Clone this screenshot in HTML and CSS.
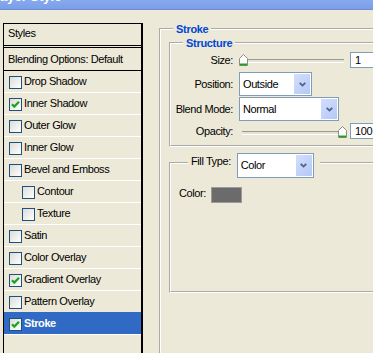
FILE: index.html
```html
<!DOCTYPE html>
<html lang="en">
<head>
    <meta charset="UTF-8">
    <meta name="viewport" content="width=device-width, initial-scale=1.0">
    <title>Layer Style</title>
    <link rel="stylesheet" href="styles.css">
</head>
<body>
    <div class="titlebar"><span class="title">Layer Style</span></div>

    <div class="dialog">
        <!-- lista de estilos -->
        <div class="styles-list">
            <div class="list-head">Styles</div>
            <div class="list-blend">Blending Options: Default</div>
            <div class="item"><span class="check"></span>Drop Shadow</div>
            <div class="item"><span class="check"><svg width="11" height="11" viewBox="0 0 11 11"><polyline points="2,5.2 4.3,7.6 9,2.8" fill="none" stroke="#21a121" stroke-width="2.2"/></svg></span>Inner Shadow</div>
            <div class="item"><span class="check"></span>Outer Glow</div>
            <div class="item"><span class="check"></span>Inner Glow</div>
            <div class="item"><span class="check"></span>Bevel and Emboss</div>
            <div class="item sub"><span class="check"></span>Contour</div>
            <div class="item sub"><span class="check"></span>Texture</div>
            <div class="item"><span class="check"></span>Satin</div>
            <div class="item"><span class="check"></span>Color Overlay</div>
            <div class="item"><span class="check"><svg width="11" height="11" viewBox="0 0 11 11"><polyline points="2,5.2 4.3,7.6 9,2.8" fill="none" stroke="#21a121" stroke-width="2.2"/></svg></span>Gradient Overlay</div>
            <div class="item"><span class="check"></span>Pattern Overlay</div>
            <div class="item selected"><span class="check"><svg width="11" height="11" viewBox="0 0 11 11"><polyline points="2,5.2 4.3,7.6 9,2.8" fill="none" stroke="#21a121" stroke-width="2.2"/></svg></span>Stroke</div>
        </div>

        <!-- opciones de trazo -->
        <div class="settings">
            <fieldset class="group stroke">
                <legend>Stroke</legend>

                <fieldset class="group structure">
                    <legend>Structure</legend>

                    <div class="field field-size">
                        <label>Size:</label>
                        <div class="slider">
                            <div class="track"></div>
                            <span class="thumb" style="left: 0px;"><svg width="9" height="12" viewBox="0 0 9 12"><path d="M0.5 4.5 L4.5 0.5 L8.5 4.5 V11.5 H0.5 Z" fill="#fff" stroke="#8f8d80"/><path d="M1 10.5 H8" stroke="#21a121" stroke-width="2"/></svg></span>
                        </div>
                        <div class="num">1</div>
                    </div>

                    <div class="field field-position">
                        <label>Position:</label>
                        <div class="combo combo-position">
                            <span class="value">Outside</span>
                            <span class="btn"><svg width="7" height="5" viewBox="0 0 7 5"><polyline points="0.7,0.8 3.5,3.6 6.3,0.8" fill="none" stroke="#4d6185" stroke-width="1.8"/></svg></span>
                        </div>
                    </div>

                    <div class="field field-blend">
                        <label>Blend Mode:</label>
                        <div class="combo combo-blend">
                            <span class="value">Normal</span>
                            <span class="btn"><svg width="7" height="5" viewBox="0 0 7 5"><polyline points="0.7,0.8 3.5,3.6 6.3,0.8" fill="none" stroke="#4d6185" stroke-width="1.8"/></svg></span>
                        </div>
                    </div>

                    <div class="field field-opacity">
                        <label>Opacity:</label>
                        <div class="slider">
                            <div class="track"></div>
                            <span class="thumb" style="left: 99px;"><svg width="9" height="12" viewBox="0 0 9 12"><path d="M0.5 4.5 L4.5 0.5 L8.5 4.5 V11.5 H0.5 Z" fill="#fff" stroke="#8f8d80"/><path d="M1 10.5 H8" stroke="#21a121" stroke-width="2"/></svg></span>
                        </div>
                        <div class="num">100</div>
                    </div>
                </fieldset>

                <fieldset class="group fill">
                    <legend>
                        <span class="fill-label">Fill Type:</span>
                        <span class="combo combo-fill">
                            <span class="value">Color</span>
                            <span class="btn"><svg width="7" height="5" viewBox="0 0 7 5"><polyline points="0.7,0.8 3.5,3.6 6.3,0.8" fill="none" stroke="#4d6185" stroke-width="1.8"/></svg></span>
                        </span>
                    </legend>

                    <div class="color-row">
                        <label>Color:</label>
                        <span class="swatch"></span>
                    </div>
                </fieldset>
            </fieldset>
        </div>
    </div>
</body>
</html>
```

FILE: styles.css
```css
html, body {
    margin: 0;
    height: 100%;
    overflow: hidden;
}
body {
    background: #ece9d8;
    font-family: "Liberation Sans", Arial, sans-serif;
    font-size: 11px;
    letter-spacing: -0.4px;
    color: #000;
}

/* barra de título (cortada) */
.titlebar {
    height: 9px;
    border-bottom: 1px solid #6a8ddc;
    background: linear-gradient(#86a9ee, #7b9ee7);
    overflow: hidden;
}
.title {
    display: block;
    margin: -11px 0 0 -8px;
    font-size: 13px;
    line-height: 15px;
    font-weight: bold;
    letter-spacing: 0;
    color: #fff;
}

.dialog {
    display: flex;
    align-items: flex-start;
    gap: 16px;
    padding: 13px 0 0 3px;
}

/* lista izquierda */
.styles-list {
    width: 140px;
    height: 340px;
    flex-shrink: 0;
    box-sizing: border-box;
    border: 1px solid #000;
    border-right-width: 2px;
    border-bottom: none;
}
.list-head {
    height: 19px;
    line-height: 19px;
    padding: 0 0 2px 4px;
    border-bottom: 1px solid #000;
}
.list-blend {
    height: 22px;
    line-height: 22px;
    margin-top: 1px;
    padding-left: 4px;
    border-top: 1px solid #000;
    border-bottom: 1px solid #000;
}
.item {
    display: flex;
    align-items: center;
    height: 19px;
    padding: 0 0 2px 5px;
    border-bottom: 1px solid #fff;
}
.item.sub {
    padding-left: 18px;
}
.item.selected {
    background: #316ac5;
    box-shadow: 0 -1px 0 #316ac5;
    color: #fff;
    font-weight: bold;
}
.check {
    display: flex;
    width: 13px;
    height: 13px;
    box-sizing: border-box;
    margin: 4px 2px 0 0;
    border: 1px solid #1c5180;
    background: linear-gradient(135deg, #dcdcd7, #fff);
}
.check svg {
    display: block;
}

/* panel derecho */
.settings {
    width: 260px;
    flex-shrink: 0;
}
.group {
    margin: 0;
    padding: 0;
    min-width: 0;
    border: 2px groove #fff;
}
.group > legend {
    padding: 0 3px;
    line-height: 12px;
    color: #0046d5;
    font-weight: bold;
    letter-spacing: -0.3px;
}
.stroke {
    padding: 2px 0 100px 8px;
}
.stroke > legend {
    margin-left: 4px;
}
.structure {
    padding: 3px 0 6px 0;
}
.structure > legend {
    margin-left: 12px;
}

.field {
    display: flex;
    align-items: center;
}
.field label {
    width: 62px;
    flex-shrink: 0;
    margin-right: 6px;
    text-align: right;
}
.field-size {
    height: 16px;
    margin-bottom: 4px;
}
.field-position {
    height: 24px;
    margin-bottom: 1px;
}
.field-blend {
    height: 24px;
    margin-bottom: 2px;
}
.field-opacity {
    height: 16px;
}
.field-opacity .slider {
    margin-top: 3px;
}

.slider {
    position: relative;
    width: 108px;
    padding: 5px 0 4px;
}
.track {
    height: 2px;
    margin: 0 3px;
    border-top: 1px solid #9d9a8c;
    border-bottom: 1px solid #fff;
    background: #e4e1d5;
}
.thumb {
    position: absolute;
    top: 0;
    display: block;
}
.thumb svg {
    display: block;
}

.num {
    width: 40px;
    height: 16px;
    box-sizing: border-box;
    margin-left: 3px;
    padding-left: 4px;
    line-height: 14px;
    border: 1px solid #7f9db9;
    background: #fff;
}

.combo {
    display: flex;
    height: 24px;
    box-sizing: border-box;
    padding: 1px;
    border: 1px solid #7f9db9;
    background: #fff;
    color: #000;
    font-weight: normal;
    letter-spacing: -0.4px;
}
.combo .value {
    flex: 1;
    padding-left: 2px;
    line-height: 20px;
}
.combo .btn {
    display: flex;
    align-items: center;
    justify-content: center;
    width: 16px;
    background: linear-gradient(135deg, #d3defc, #b4c8f6);
}
.combo-position {
    width: 73px;
}
.combo-blend {
    width: 100px;
}

.fill {
    margin-top: 6px;
    padding: 14px 0 88px 8px;
}
.fill > legend {
    display: flex;
    align-items: flex-start;
    height: 20px;
    margin-left: 9px;
    padding: 0 6px 0 3px;
    color: #000;
    font-weight: normal;
    letter-spacing: -0.4px;
}
.fill-label {
    line-height: 17px;
}
.combo-fill {
    width: 77px;
    height: 25px;
    margin-left: 6px;
}
.combo-fill .value {
    line-height: 21px;
}

.color-row {
    display: flex;
    align-items: flex-start;
    height: 16px;
}
.color-row label {
    width: 32px;
    line-height: 13px;
}
.swatch {
    width: 31px;
    height: 16px;
    box-sizing: border-box;
    border: 1px solid #9c9c9c;
    background: #6b6b6b;
}
```
